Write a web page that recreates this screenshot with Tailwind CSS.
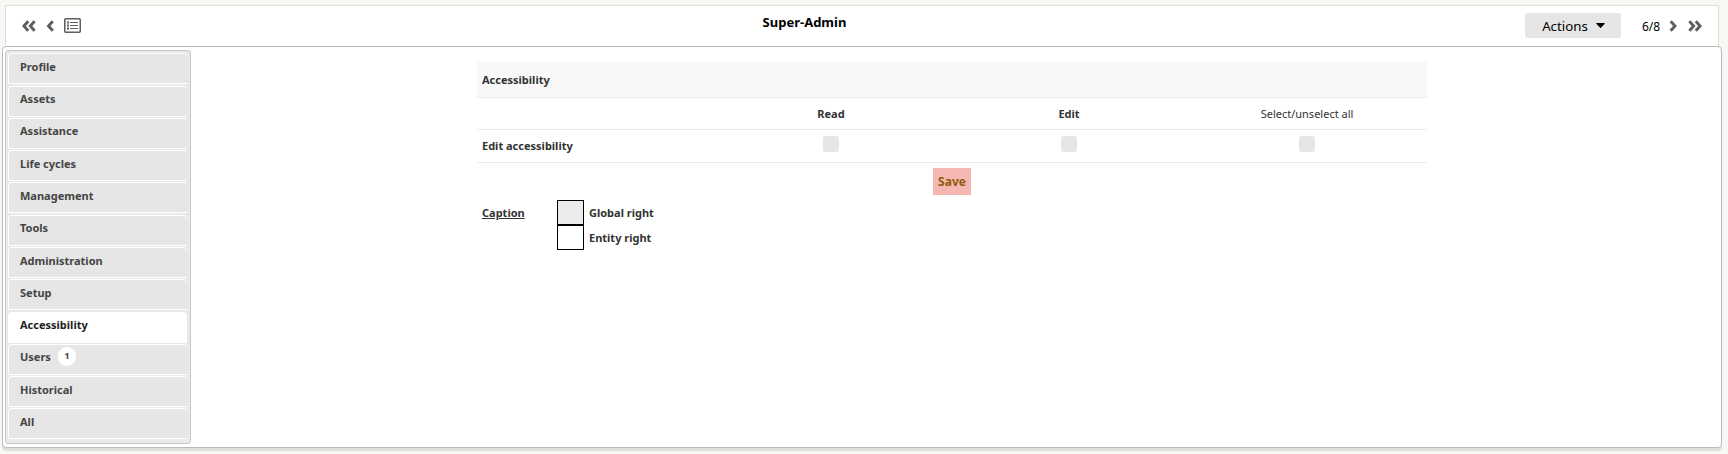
<!DOCTYPE html>
<html lang="en">
<head>
<meta charset="utf-8">
<title>Super-Admin</title>
<script src="https://cdn.jsdelivr.net/npm/@tailwindcss/browser@4"></script>
</head>
<body class="h-[454px] overflow-hidden bg-[#f8f7f3] pt-[5px] font-['Noto_Sans',sans-serif] text-[11px] leading-4 text-[#333]">
<header class="ml-[5px] flex h-[41px] w-[1714px] border border-b-0 border-[#ddd] bg-white text-[#5e5e5e]">
  <div class="flex w-[600px] items-start pl-4 pt-[14px]">
    <svg class="h-[12px] w-[14px]" viewBox="0 0 14 12" fill="none" stroke="currentColor" stroke-width="2.9"><path d="M6.2 1.2 1.9 6 6.2 10.8M12.6 1.2 8.3 6 12.6 10.8"/></svg>
    <svg class="ml-[10px] h-[12px] w-[8px]" viewBox="0 0 8 12" fill="none" stroke="currentColor" stroke-width="2.9"><path d="M6.8 1.2 2.5 6 6.8 10.8"/></svg>
    <svg class="ml-[10px] -mt-[2px] h-[15px] w-[17px]" viewBox="0 0 17 15" fill="none" stroke="currentColor"><rect x=".75" y=".75" width="15.5" height="13.5" rx="1" stroke-width="1.5"/><path d="M3 4.5h2M3 7.5h2M3 10.5h2" stroke-width="2"/><path d="M6 4.5h8M6 7.5h8M6 10.5h8" stroke-width="1.2"/></svg>
  </div>
  <h1 class="w-[397px] pt-[8px] text-center text-[13px] font-bold leading-[17px] text-black">Super-Admin</h1>
  <div class="flex flex-1 items-start justify-end pr-[16px] pt-[7px]">
    <button class="flex h-[25px] w-24 items-center rounded-[3px] bg-[#e6e6e6] pl-[17px] text-[13.3px] text-black"><span class="w-[46px]">Actions</span><svg class="ml-[8px] h-[5px] w-[9px]" viewBox="0 0 9 5"><path d="M.5 0h8q.5.3 0 .9L4.9 4.7q-.4.4-.8 0L.5.9Q0 .3.5 0z" fill="black"/></svg></button>
    <span class="ml-[21px] mt-[6px] w-[18px] whitespace-nowrap text-[12px] text-black">6/8</span>
    <svg class="ml-[9px] mt-[7px] h-[12px] w-[8px]" viewBox="0 0 8 12" fill="none" stroke="currentColor" stroke-width="2.9"><path d="M1.7 1.2 6 6 1.7 10.8"/></svg>
    <svg class="ml-[11px] mt-[7px] h-[12px] w-[14px]" viewBox="0 0 14 12" fill="none" stroke="currentColor" stroke-width="2.9"><path d="M1.4 1.2 5.7 6 1.4 10.8M7.8 1.2 12.1 6 7.8 10.8"/></svg>
  </div>
</header>
<main class="ml-[2px] flex h-[402px] w-[1720px] rounded-[4px] border border-[#bbb] bg-white pl-[2px] pt-[3px] shadow-[0_3px_1px_#dedede]">
  <nav class="flex h-[394px] w-[186px] flex-col rounded-[3px] border border-[#c8c8c8] bg-[#e9e9e9] pl-[2px] pt-[2px] font-bold text-[#444]">
    <div class="h-[33px]"><div class="h-[31px] w-[179px] rounded-t-[4px] border border-r-0 border-white bg-[#e6e6e6] pl-[11px] pt-[5px]">Profile</div></div>
    <div class="h-[32px]"><div class="h-[31px] w-[179px] rounded-t-[4px] border border-r-0 border-white bg-[#e6e6e6] pl-[11px] pt-[4px]">Assets</div></div>
    <div class="h-[32px]"><div class="h-[31px] w-[179px] rounded-t-[4px] border border-r-0 border-white bg-[#e6e6e6] pl-[11px] pt-[4px]">Assistance</div></div>
    <div class="h-[32px]"><div class="h-[31px] w-[179px] rounded-t-[4px] border border-r-0 border-white bg-[#e6e6e6] pl-[11px] pt-[5px]">Life cycles</div></div>
    <div class="h-[33px]"><div class="h-[31px] w-[179px] rounded-t-[4px] border border-r-0 border-white bg-[#e6e6e6] pl-[11px] pt-[5px]">Management</div></div>
    <div class="h-[32px]"><div class="h-[31px] w-[179px] rounded-t-[4px] border border-r-0 border-white bg-[#e6e6e6] pl-[11px] pt-[4px]">Tools</div></div>
    <div class="h-[32px]"><div class="h-[31px] w-[179px] rounded-t-[4px] border border-r-0 border-white bg-[#e6e6e6] pl-[11px] pt-[5px]">Administration</div></div>
    <div class="h-[33px]"><div class="h-[31px] w-[179px] rounded-t-[4px] border border-r-0 border-white bg-[#e6e6e6] pl-[11px] pt-[5px]">Setup</div></div>
    <div class="h-[32px]"><div class="h-[31px] w-[179px] rounded-t-[4px] border border-r-0 border-white bg-white pl-[11px] pt-[4px] text-[#212121]">Accessibility</div></div>
    <div class="h-[32px]"><div class="flex h-[31px] w-[179px] items-start rounded-t-[4px] border border-r-0 border-white bg-[#e6e6e6] pl-[11px]"><span class="w-[38px] pt-[4px]">Users</span><span class="mt-[2px] flex h-[19px] w-[18px] items-center justify-center rounded-full bg-white pb-px text-[9.5px]">1</span></div></div>
    <div class="h-[32px]"><div class="h-[31px] w-[179px] rounded-t-[4px] border border-r-0 border-white bg-[#e6e6e6] pl-[11px] pt-[5px]">Historical</div></div>
    <div class="h-[32px]"><div class="h-[31px] w-[179px] rounded-t-[4px] border border-r-0 border-white bg-[#e6e6e6] pl-[11px] pt-[5px]">All</div></div>
  </nav>
  <section class="ml-[286px] mt-[12px] w-[950px] font-bold">
    <div class="h-[36px] border-b border-[#ebebeb] bg-[#f8f8f8] pl-[5px] pt-[10px]">Accessibility</div>
    <div class="grid h-[32px] grid-cols-[235px_238px_238px_238px] border-b border-[#ebebeb] pt-[8px] text-center"><span></span><span>Read</span><span>Edit</span><span class="font-normal">Select/unselect all</span></div>
    <div class="grid h-[33px] grid-cols-[235px_238px_238px_238px] justify-items-center border-b border-[#ebebeb]">
      <span class="justify-self-start pl-[5px] pt-[8px]">Edit accessibility</span>
      <span class="mt-[6px] size-4 rounded-[3px] bg-[#e6e6e6]"></span>
      <span class="mt-[6px] size-4 rounded-[3px] bg-[#e6e6e6]"></span>
      <span class="mt-[6px] size-4 rounded-[3px] bg-[#e6e6e6]"></span>
    </div>
    <button class="mx-auto mt-[5px] flex h-[27px] w-[38px] items-center justify-center bg-[#f5b7b1] text-[12px] text-[#8f5a0a]">Save</button>
    <div class="mt-[5px] flex pl-[5px]">
      <span class="w-[75px] pt-[5px] underline">Caption</span>
      <div>
        <div class="flex h-[25px]"><span class="mr-[5px] w-[27px] border border-black bg-[#ebebeb]"></span><span class="pt-[5px]">Global right</span></div>
        <div class="flex h-[25px]"><span class="mr-[5px] w-[27px] border border-black"></span><span class="pt-[5px]">Entity right</span></div>
      </div>
    </div>
  </section>
</main>
</body>
</html>
